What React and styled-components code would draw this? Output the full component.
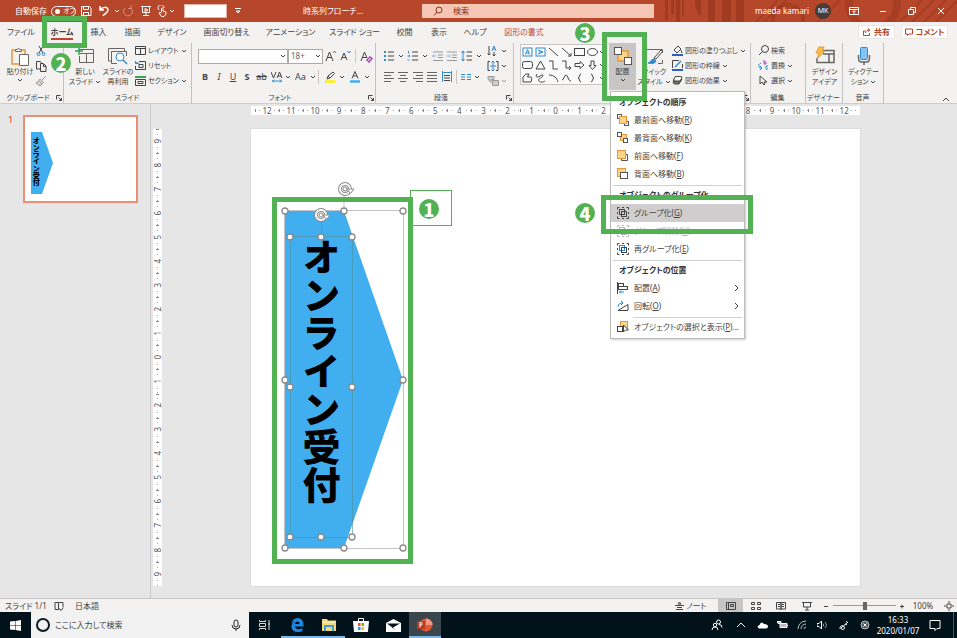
import React from "react";
import styled, { createGlobalStyle, css } from "styled-components";

const GREEN = "#52b152";
const INK = "#444444";
const BLUE = "#2e8bd0";
const ORANGE = "#e8963a";

const GlobalStyle = createGlobalStyle`
  * { box-sizing: border-box; }
  body {
    margin: 0;
    font-family: "Noto Sans", "Noto Sans CJK JP", sans-serif;
    font-feature-settings: "palt";
    font-size: 8px;
    line-height: 10px;
    color: ${INK};
    background: #e6e6e6;
  }
  button, input, select { font: inherit; font-feature-settings: inherit; color: inherit; }
`;

const Page = styled.div`
  display: flex;
  flex-direction: column;
  min-height: 100vh;
`;

const plain = css`
  border: 0;
  padding: 0;
  margin: 0;
  background: none;
  cursor: pointer;
  white-space: nowrap;
`;

const Svg = styled.svg`
  display: block;
  flex: none;
  fill: none;
  stroke: currentColor;
  stroke-width: 1;
`;

function Icon({ w = 12, h = w, box, children }) {
  return (
    <Svg width={w} height={h} viewBox={box || `0 0 ${w} ${h}`} aria-hidden="true">
      {children}
    </Svg>
  );
}

const Chevron = () => (
  <Icon w={6}>
    <path d="M1 2l2 2 2-2" />
  </Icon>
);

/* ---------- callouts ---------- */

const Frame = styled.div`
  position: absolute;
  z-index: 6;
  left: ${(p) => p.$x}px;
  top: ${(p) => p.$y}px;
  width: ${(p) => p.$w}px;
  height: ${(p) => p.$h}px;
  border: 5px solid ${GREEN};
  pointer-events: none;
`;

const Badge = styled.span`
  position: absolute;
  z-index: 7;
  left: ${(p) => p.$x}px;
  top: ${(p) => p.$y}px;
  width: 20px;
  height: 20px;
  border-radius: 50%;
  background: ${GREEN};
  color: #fff;
  font: 900 18px/20px "Noto Sans CJK JP", "Liberation Sans", sans-serif;
  text-align: center;
  pointer-events: none;
`;

/* ---------- title bar ---------- */

const TitleBar = styled.header`
  position: relative;
  display: grid;
  grid-template-columns: 248px 174px minmax(120px, 1fr) 303px;
  align-items: center;
  height: 22px;
  background: #b7472a;
  color: #fff;
`;

const Pattern = styled.svg`
  position: absolute;
  right: 0;
  top: 0;
`;

const QuickBar = styled.div`
  display: flex;
  align-items: center;
  padding-left: 15px;
`;

const AutoSave = styled.label`
  display: flex;
  align-items: center;
  gap: 4px;
  width: 67px;
  white-space: nowrap;
`;

const Toggle = styled.span`
  display: flex;
  align-items: center;
  gap: 3px;
  width: 25px;
  height: 11px;
  padding: 0 3px;
  border: 1px solid #fff;
  border-radius: 6px;
  font-size: 7px;
  line-height: 8px;
  input { appearance: none; flex: none; width: 5px; height: 5px; margin: 0; border-radius: 50%; background: #fff; }
`;

const TitleButton = styled.button`
  ${plain}
  display: grid;
  place-items: center;
  width: ${(p) => p.$w || 16}px;
  height: 18px;
  opacity: ${(p) => (p.disabled ? 0.4 : 1)};
`;

const TitleInput = styled.input`
  width: 43px;
  height: 14px;
  margin-left: 8px;
  border: 1px solid #e3b5a8;
  background: #fff;
`;

const DocTitle = styled.div`
  padding-left: 55px;
  white-space: nowrap;
`;

const SearchBox = styled.label`
  display: flex;
  align-items: center;
  gap: 10px;
  height: 14px;
  padding-left: 11px;
  background: #f6c6b5;
  color: #8c3219;
  input { flex: 1; min-width: 0; border: 0; padding: 0; background: none; outline: 0; }
  input::placeholder { color: #8c3219; opacity: 1; }
`;

const Account = styled.div`
  position: relative;
  display: flex;
  align-items: center;
  justify-content: flex-end;
  padding-right: 2px;
`;

const Avatar = styled.span`
  width: 16px;
  height: 16px;
  margin: 0 8px 0 6px;
  border-radius: 50%;
  background: #4b3a35;
  font-size: 7px;
  line-height: 16px;
  text-align: center;
`;

const UserName = styled.span`
  line-height: 12px;
`;

/* ---------- tabs ---------- */

const TabBar = styled.nav`
  display: flex;
  justify-content: space-between;
  height: 20px;
  background: #f3f2f1;
`;

const Tabs = styled.div`
  display: grid;
  grid-template-columns: 42px 40px 33px 35px 44px 65px 63px 65px 35px 34px 38px 60px;
`;

const TabCell = styled.div`
  position: relative;
  display: grid;
`;

const Tab = styled.button`
  ${plain}
  font-weight: ${(p) => (p.$active ? 700 : 400)};
  color: ${(p) => (p.$accent ? "#c8482c" : INK)};
  span {
    display: inline-block;
    height: 16px;
    line-height: 15px;
    border-bottom: 2px solid ${(p) => (p.$active ? "#c2452b" : "transparent")};
  }
`;

const TabActions = styled.div`
  display: flex;
  align-items: center;
  gap: 6px;
  padding-right: 9px;
`;

const ActionButton = styled.button`
  ${plain}
  display: flex;
  align-items: center;
  justify-content: center;
  gap: 3px;
  width: ${(p) => p.$w}px;
  height: 14px;
  border: 1px solid #e9e6e4;
  background: #fff;
  color: #b7472a;
  font-weight: 700;
  line-height: 12px;
`;

/* ---------- ribbon ---------- */

const Ribbon = styled.section`
  display: flex;
  position: relative;
  height: 62px;
  padding-top: 1px;
  background: #f3f2f1;
  border-bottom: 1px solid #cfcdcc;
  font-size: 7px;
`;

const Group = styled.div`
  display: flex;
  flex-direction: column;
  flex: none;
  width: ${(p) => p.$w}px;
  height: 60px;
  border-right: 1px solid #c4c2c1;
`;

const GroupBody = styled.div`
  display: flex;
  flex: 1;
  padding-left: ${(p) => p.$pad || 0}px;
  gap: ${(p) => p.$gap || 0}px;
`;

const GroupLabel = styled.div`
  display: flex;
  align-items: center;
  height: 10px;
  padding-right: 1px;
  white-space: nowrap;
  span { flex: 1; text-align: center; }
`;

const BigButton = styled.button`
  ${plain}
  display: flex;
  flex-direction: column;
  align-items: center;
  width: ${(p) => p.$w}px;
  height: 47px;
  padding-top: 3px;
  background: ${(p) => (p.$pressed ? "#c8c6c4" : "none")};
  svg:first-child { margin-bottom: 1px; }
`;

const LabelLine = styled.span`
  display: flex;
  align-items: center;
  gap: 2px;
  height: 10px;
`;

const Stack = styled.div`
  display: flex;
  flex-direction: column;
  align-items: flex-start;
`;

const SmallButton = styled.button`
  ${plain}
  display: flex;
  align-items: center;
  gap: 2px;
  height: 15px;
  opacity: ${(p) => (p.disabled ? 0.5 : 1)};
`;

const Rows = styled.div`
  display: flex;
  flex-direction: column;
  gap: 7px;
  padding-top: 6px;
`;

const Row = styled.div`
  display: flex;
  align-items: center;
  height: 14px;
`;

const Tool = styled.button`
  ${plain}
  display: grid;
  place-items: center;
  width: ${(p) => p.$w || 14}px;
  height: 14px;
  font-size: 9px;
  line-height: 14px;
  opacity: ${(p) => (p.disabled ? 0.5 : 1)};
  font-weight: ${(p) => (p.$bold ? 700 : 400)};
  font-style: ${(p) => (p.$italic ? "italic" : "normal")};
  text-decoration: ${(p) => p.$line || "none"};
`;

const Bar = styled.span`
  width: 1px;
  height: 14px;
  margin: 0 ${(p) => p.$m || 2}px;
  background: #c8c6c4;
`;

const SelectBox = styled.span`
  display: flex;
  align-items: center;
  width: ${(p) => p.$w}px;
  height: 15px;
  padding-right: 1px;
  border: 1px solid #ababab;
  background: #fff;
  font-size: 8px;
  select { appearance: none; flex: 1; min-width: 0; height: 13px; padding: 0 2px; border: 0; background: none; line-height: 12px; color: #666; }
`;

const Gallery = styled.div`
  display: grid;
  grid-template-columns: repeat(6, 13px) 6px;
  grid-auto-rows: 13px;
  align-self: flex-start;
  margin-top: 2px;
  outline: 1px solid #c8c6c4;
  background: #fafafa;
`;

const ShapeButton = styled.button`
  ${plain}
  display: grid;
  place-items: center;
`;

const ArrangeCell = styled.div`
  position: relative;
  z-index: 5;
  margin-left: 4px;
`;

const Collapse = styled.button`
  ${plain}
  margin: auto 7px 1px auto;
`;

/* ---------- menu ---------- */

const Menu = styled.div`
  position: absolute;
  left: 1px;
  top: 48px;
  width: 135px;
  padding: 1px 0 2px;
  border: 1px solid #bdbbb9;
  background: #fff;
  box-shadow: 1px 1px 2px rgba(0, 0, 0, 0.2);
  font-size: 8px;
`;

const MenuHead = styled.div`
  padding-left: 8px;
  font-weight: 700;
  line-height: 17px;
  height: 18px;
  color: #333;
  white-space: nowrap;
`;

const MenuRule = styled.hr`
  height: 1px;
  margin: 2px 2px 0 ${(p) => (p.$inset ? 22 : 2)}px;
  border: 0;
  background: #d2d0ce;
`;

const MenuCell = styled.div`
  position: relative;
`;

const MenuButton = styled.button`
  ${plain}
  display: flex;
  align-items: center;
  gap: 5px;
  width: 100%;
  height: 18px;
  padding: 0 4px 0 6px;
  text-align: left;
  line-height: 16px;
  background: ${(p) => (p.$active ? "#cfcdcd" : "none")};
  color: ${(p) => (p.disabled ? "#b5b5b5" : INK)};
  span { flex: 1; }
`;

/* ---------- workspace ---------- */

const Workspace = styled.main`
  display: flex;
  flex: 1;
  min-height: 494px;
`;

const ThumbPane = styled.aside`
  display: flex;
  align-items: flex-start;
  gap: 10px;
  width: 151px;
  padding: 11px 0 0 8px;
  border-right: 1px solid #cccccc;
  color: #d04727;
  font-size: 9px;
`;

const Thumb = styled.button`
  ${plain}
  position: relative;
  width: 115px;
  height: 88px;
  border: 2px solid #ee8f75;
  background: #fff;
`;

const ThumbText = styled.span`
  position: absolute;
  left: 7px;
  top: 20px;
  writing-mode: vertical-rl;
  font: 900 7px/8px "Noto Sans CJK JP", sans-serif;
  font-feature-settings: normal;
  color: #000;
`;

const ThumbShape = styled.svg`
  position: absolute;
  left: 6px;
  top: 15px;
`;

const Stage = styled.div`
  display: grid;
  grid-template-columns: 9px minmax(0, 1fr);
  grid-template-rows: 9px auto;
  column-gap: 89px;
  row-gap: 14px;
  align-content: start;
  flex: 1;
  min-width: 0;
  padding: 2px 97px 12px 2px;
`;

const RulerH = styled.div`
  grid-column: 2;
  display: flex;
  height: 9px;
  padding: 0 4px;
  background: #fff;
  color: #555;
`;

const RulerV = styled.div`
  display: flex;
  flex-direction: column;
  background: #fff;
  color: #555;
`;

const Cell = styled.span`
  flex: 1;
  display: flex;
  flex-direction: ${(p) => (p.$down ? "column" : "row")};
  align-items: center;
  justify-content: space-between;
  line-height: 9px;
  i { width: 1px; height: 1px; background: #aaa; }
`;

const Tick = styled.b`
  width: ${(p) => (p.$down ? 3 : 1)}px;
  height: ${(p) => (p.$down ? 1 : 3)}px;
  background: #888;
`;

const RulerNumber = styled.span`
  min-width: 5px;
  text-align: center;
  writing-mode: ${(p) => (p.$down ? "vertical-rl" : "horizontal-tb")};
  transform: ${(p) => (p.$down ? "rotate(180deg)" : "none")};
`;

const Slide = styled.div`
  position: relative;
  aspect-ratio: 609 / 457;
  background: #fff;
  box-shadow: 0 0 0 1px #dcdcdc;
`;

const ShapeArt = styled.svg`
  position: absolute;
  left: 25px;
  top: 42px;
  z-index: ${(p) => p.$z || 0};
`;

const ShapeText = styled.div`
  position: absolute;
  left: 50px;
  top: 109px;
  writing-mode: vertical-rl;
  font: 900 38px/40px "Noto Sans CJK JP", sans-serif;
  font-feature-settings: normal;
  color: #000;
`;

const NumberBox = styled.div`
  position: absolute;
  left: 159px;
  top: 61px;
  width: 42px;
  height: 36px;
  border: 1px solid ${GREEN};
`;

/* ---------- status bar and task bar ---------- */

const StatusBar = styled.footer`
  display: flex;
  align-items: center;
  height: 14px;
  padding-left: 5px;
  border-top: 1px solid #c6c6c6;
  background: #f3f2f1;
  line-height: 12px;
`;

const Push = styled.span`
  flex: 1;
`;

const StatusText = styled.span`
  width: ${(p) => p.$w}px;
  white-space: nowrap;
`;

const StatusButton = styled.button`
  ${plain}
  display: flex;
  align-items: center;
  justify-content: center;
  gap: 2px;
  width: ${(p) => p.$w}px;
  height: 13px;
  margin-right: ${(p) => p.$after || 0}px;
  background: ${(p) => (p.$active ? "#c8c6c4" : "none")};
`;

const Zoom = styled.input`
  appearance: none;
  width: 63px;
  height: 9px;
  margin: 0 2px 0 0;
  background: linear-gradient(#999, #999) center / 100% 1px no-repeat;
  &::-webkit-slider-thumb { appearance: none; width: 4px; height: 8px; background: #666; }
`;

const TaskBar = styled.footer`
  display: flex;
  align-items: stretch;
  height: 26px;
  background: #02121a;
  color: #fff;
`;

const TaskButton = styled.button`
  ${plain}
  display: grid;
  place-items: center;
  width: ${(p) => p.$w || 32}px;
  background: ${(p) => (p.$active ? "#3a464c" : "none")};
  box-shadow: ${(p) => (p.$open ? "inset 0 -2px #76b9ed" : "none")};
`;

const TaskSearch = styled.label`
  display: flex;
  align-items: center;
  gap: 5px;
  width: 218px;
  padding: 0 8px 0 5px;
  background: #f2f2f2;
  color: #222;
  input { flex: 1; min-width: 0; padding: 0; border: 0; background: none; line-height: 14px; }
  input::placeholder { color: #444; opacity: 1; }
`;

const Clock = styled.div`
  display: flex;
  flex-direction: column;
  justify-content: center;
  width: 48px;
  text-align: center;
  line-height: 11px;
`;

const DeskEdge = styled.span`
  width: 4px;
  margin-left: 5px;
  border-left: 1px solid #4c5a60;
`;

/* ---------- icons ---------- */

const Launcher = () => (
  <Tool $w={6} aria-label="詳細">
    <Icon w={6}>
      <path d="M.5 4.500V.5h4M2.500 2.500l3 3M5.500 3v2.500H3" />
    </Icon>
  </Tool>
);

const Lines = ({ rows }) => (
  <Icon w={11}>
    {rows.map(([a, b], i) => (
      <path key={i} stroke="#666" d={`M${a} ${i * 3 + 0.5}H${b}`} />
    ))}
  </Icon>
);

const Bullets = () => (
  <Icon w={12}>
    <path stroke={BLUE} strokeWidth="2" d="M1 2h2M1 6h2M1 10h2" />
    <path d="M5 2h6M5 6h6M5 10h6" />
  </Icon>
);

const Numbering = () => (
  <Icon w={12}>
    <path stroke={BLUE} d="M1.500 1v2.500M.5 6h2M.5 10h2M2.500 5v2" />
    <path d="M5 2h6M5 6h6M5 10h6" />
  </Icon>
);

const Indent = ({ right }) => (
  <Icon w={12}>
    <path d="M1 2h10M6 5h5M6 7.500h5M1 10.500h10" />
    <path stroke={BLUE} d={right ? "M.5 6h4M3 4.500L4.500 6 3 7.500" : "M.5 6h4M2 4.500L.5 6 2 7.500"} />
  </Icon>
);

const SHAPES = [
  <><rect x="1" y="1" width="9" height="8" stroke={BLUE} /><path stroke={BLUE} d="M3.500 7.500l2-5 2 5M4 6h3" /></>,
  <><rect x="1" y="1" width="9" height="8" stroke={BLUE} /><path stroke={BLUE} d="M3 3l5 2-5 2M5 4v2" /></>,
  <path d="M1 1l9 8" />,
  <path d="M1 1l9 8M10 6v3H7" />,
  <rect x=".5" y="1.500" width="10" height="7" />,
  <ellipse cx="5.500" cy="5" rx="5" ry="3.500" />,
  <rect x=".5" y="1.500" width="10" height="7" rx="2" />,
  <path d="M5.500 1L10 9H1z" />,
  <path d="M1 1h4v8h5" />,
  <path d="M1 1h4v7h5M8 6l2 2-2 2" />,
  <path d="M1 3.500h5V1.500L10 5 6 8.500v-2H1z" />,
  <path d="M4 1h3v4.500h2L5.500 9.500 2 5.500h2z" />,
  <path d="M1 9V4l3-3h3L5.500 4H9c1 0 1 2 0 5z" />,
  <path d="M2 1c-2 3 0 4 3 2s4-1 2 1-5 2-3 4 4 1 6 0" />,
  <path d="M1 2c5 0 8 3 9 7" />,
  <path d="M1 7c2 0 2-5 4-5s2 6 5 6" />,
  <path d="M7 1C5 1 6 5 4 5c2 0 1 4 3 4" />,
  <path d="M4 1c2 0 1 4 3 4-2 0-1 4-3 4" />,
];

const ArrangeIcon = () => (
  <Icon w={20}>
    <rect x="5" y="5" width="10" height="10" fill="#fbd48a" stroke={ORANGE} strokeWidth="1.500" />
    <rect x="1.500" y="1.500" width="7" height="7" fill="#fff" stroke="#555" />
    <rect x="11.500" y="11.500" width="7" height="7" fill="#fff" stroke="#555" />
  </Icon>
);

const FrontIcon = () => (
  <Icon w={12}>
    <rect x=".5" y=".5" width="4" height="4" stroke="#555" />
    <rect x="7.500" y="7.500" width="4" height="4" stroke="#555" />
    <rect x="2.500" y="2.500" width="7" height="7" fill="#fbd48a" stroke={ORANGE} />
  </Icon>
);

const BackIcon = () => (
  <Icon w={12}>
    <rect x="3.500" y="2.500" width="6" height="6" fill="#fbd48a" stroke={ORANGE} />
    <rect x=".5" y=".5" width="4" height="4" fill="#fff" stroke="#555" />
    <rect x="6.500" y="6.500" width="4" height="4" fill="#fff" stroke="#555" />
  </Icon>
);

const ForwardIcon = () => (
  <Icon w={12}>
    <path stroke="#555" d="M8.500 4.500h2v6h-6V8" />
    <rect x=".5" y=".5" width="8" height="8" fill="#fbd48a" stroke={ORANGE} />
  </Icon>
);

const BackwardIcon = () => (
  <Icon w={12}>
    <rect x=".5" y=".5" width="8" height="8" fill="#fbd48a" stroke={ORANGE} />
    <rect x="3.500" y="4.500" width="7" height="6" fill="#fff" stroke="#555" />
  </Icon>
);

const GroupIcon = ({ regroup }) => (
  <Icon w={12}>
    <path d="M.5 2.500v-2h2M9.500.5h2v2M11.500 9.500v2h-2M2.500 11.500h-2v-2M5 .5h2M5 11.500h2M.5 5v2M11.500 5v2" />
    <rect x="2.500" y="2.500" width="5" height="5" stroke={regroup ? BLUE : "currentColor"} />
    <rect x="4.500" y="4.500" width="5" height="5" />
  </Icon>
);

const AlignIcon = () => (
  <Icon w={12}>
    <path d="M.5 0v12" />
    <rect x="1.500" y="1.500" width="5" height="3" />
    <rect x="1.500" y="4.500" width="9" height="3" />
    <path stroke={BLUE} d="M7 10H2M4 8.500L2.500 10 4 11.500" />
  </Icon>
);

const RotateIcon = () => (
  <Icon w={12}>
    <path d="M1 10.500h10V4.500z" />
    <path stroke={BLUE} d="M1 7c0-3 2-4 5-4M4 1l2 2-2 2" />
  </Icon>
);

const PaneIcon = () => (
  <Icon w={12}>
    <rect x="3.500" y=".5" width="7" height="7" fill="#fbd48a" stroke={ORANGE} />
    <rect x=".5" y="5.500" width="5" height="5" fill="#fff" />
    <path fill="#fff" d="M6.500 4v7l2-2h3z" />
  </Icon>
);

/* ---------- sections ---------- */

function Title() {
  return (
    <TitleBar>
      <Pattern width="297" height="22" viewBox="0 0 297 22" aria-hidden="true">
        <g fill="#8e2f18" fillOpacity=".55">
          <path d="M5 0h3v20H5zM11 0h3v14h-3zM16 0h4v22h-4zM22 0h2v16h-2zM35 0h6v16q-7-6-6-16zM48 0h7v22h-7zM62 0h9v22h-9zM76 0h8v22h-8z" />
        </g>
        <g fill="none" stroke="#8e2f18" strokeOpacity=".4" strokeWidth="4">
          <circle cx="128" cy="20" r="15" />
          <circle cx="213" cy="4" r="24" strokeWidth="8" />
          <path d="M96 22L118 0M104 22L126 0M240 22L262 0M252 22L274 0M264 22L286 0M276 22L297 1M158 22L180 0" strokeWidth="2" />
        </g>
      </Pattern>
      <QuickBar>
        <AutoSave>
          自動保存
          <Toggle>
            <input type="checkbox" aria-label="自動保存" />
            オフ
          </Toggle>
        </AutoSave>
        <TitleButton aria-label="上書き保存">
          <Icon w={12}><path d="M1.500 1.500h8l1.500 1.500v7.500H1.500zM3.500 1.500v3h5v-3M3.500 10.500v-3h5v3" /></Icon>
        </TitleButton>
        <TitleButton $w={20} aria-label="元に戻す">
          <Icon w={12}><path strokeWidth="1.500" d="M2 1v4h4M2 5c2-3 8-4 8 0 0 3-4 4-5 6" /></Icon>
        </TitleButton>
        <TitleButton $w={8} aria-label="元に戻す一覧"><Chevron /></TitleButton>
        <TitleButton $w={16} disabled aria-label="やり直し">
          <Icon w={12}><path d="M9 3a4.500 4.500 0 1 1-6 0M9 0v3.500H6" /></Icon>
        </TitleButton>
        <TitleButton $w={20} aria-label="スライドショー">
          <Icon w={12}><path d="M1 1.500h10M2.500 2v5.500h7V2M6 8v3M3 10.500h6M5 3.500v3L8 5z" /></Icon>
        </TitleButton>
        <TitleButton $w={14} aria-label="タッチ">
          <Icon w={12}><path d="M3 5a3 3 0 1 1 5-2M5.500 7V3.500q1-1 1.500 0V6l3 1v2l-2 2.500H5.500L3 8q0-1.500 2.500 0" /></Icon>
        </TitleButton>
        <TitleButton $w={8} aria-label="タッチ一覧"><Chevron /></TitleButton>
        <TitleInput aria-label="名前" />
        <TitleButton $w={22} aria-label="クイックアクセスのカスタマイズ">
          <Icon w={6}><path d="M0 .5h6M1 3l2 2 2-2z" /></Icon>
        </TitleButton>
      </QuickBar>
      <DocTitle>時系列フローチ…</DocTitle>
      <SearchBox>
        <Icon w={10}><circle cx="6" cy="4" r="3" /><path d="M4 6L1 9.500" /></Icon>
        <input placeholder="検索" aria-label="検索" />
      </SearchBox>
      <Account>
        <UserName>maeda kamari</UserName>
        <Avatar>MK</Avatar>
        <TitleButton $w={29} aria-label="リボンの表示オプション">
          <Icon w={10}><path d="M.5 1.500h9v7h-9zM.5 3.500h9M5 8V5M3.500 6L5 4.500 6.500 6" /></Icon>
        </TitleButton>
        <TitleButton $w={29} aria-label="最小化"><Icon w={8}><path d="M1 4.500h6" /></Icon></TitleButton>
        <TitleButton $w={29} aria-label="元に戻す (縮小)">
          <Icon w={8}><path d="M.5 2.500h5v5h-5zM2.500 2V.5h5v5H6" /></Icon>
        </TitleButton>
        <TitleButton $w={29} aria-label="閉じる"><Icon w={8}><path d="M1 1l6 6M7 1L1 7" /></Icon></TitleButton>
      </Account>
    </TitleBar>
  );
}

const TABS = ["ファイル", "ホーム", "挿入", "描画", "デザイン", "画面切り替え", "アニメーション", "スライド ショー", "校閲", "表示", "ヘルプ", "図形の書式"];

function TabRow() {
  return (
    <TabBar>
      <Tabs>
        {TABS.map((name, i) => (
          <TabCell key={name}>
            <Tab $active={i === 1} $accent={i === 11}><span>{name}</span></Tab>
            {i === 1 && (
              <>
                <Frame $x={0} $y={-6} $w={45} $h={32} />
                <Badge $x={9} $y={31}>2</Badge>
              </>
            )}
          </TabCell>
        ))}
      </Tabs>
      <TabActions>
        <ActionButton $w={37}>
          <Icon w={8}><path d="M2.500 3H.5v4.500h6V5M2.500 5c0-2 2-3 4-3M5 .5L7 2 5 3.500" /></Icon>
          共有
        </ActionButton>
        <ActionButton $w={47}>
          <Icon w={8}><path d="M.5 1h7v5H4L2.500 7.500V6h-2z" /></Icon>
          コメント
        </ActionButton>
      </TabActions>
    </TabBar>
  );
}

function RibbonGroup({ w, pad, gap, label, launcher, children }) {
  return (
    <Group $w={w}>
      <GroupBody $pad={pad} $gap={gap}>{children}</GroupBody>
      <GroupLabel><span>{label}</span>{launcher && <Launcher />}</GroupLabel>
    </Group>
  );
}

function ArrangeMenu() {
  return (
    <Menu>
      <MenuHead>オブジェクトの順序</MenuHead>
      <MenuButton><FrontIcon /><span>最前面へ移動(<u>R</u>)</span></MenuButton>
      <MenuButton><BackIcon /><span>最背面へ移動(<u>K</u>)</span></MenuButton>
      <MenuButton><ForwardIcon /><span>前面へ移動(<u>F</u>)</span></MenuButton>
      <MenuButton><BackwardIcon /><span>背面へ移動(<u>B</u>)</span></MenuButton>
      <MenuRule />
      <MenuHead>オブジェクトのグループ化</MenuHead>
      <MenuCell>
        <MenuButton $active><GroupIcon /><span>グループ化(<u>G</u>)</span></MenuButton>
        <Frame $x={-10} $y={-9} $w={152} $h={39} />
        <Badge $x={-36} $y={-1}>4</Badge>
      </MenuCell>
      <MenuButton disabled><GroupIcon /><span>グループ解除(<u>U</u>)</span></MenuButton>
      <MenuButton><GroupIcon regroup /><span>再グループ化(<u>E</u>)</span></MenuButton>
      <MenuRule />
      <MenuHead>オブジェクトの位置</MenuHead>
      <MenuButton><AlignIcon /><span>配置(<u>A</u>)</span><Icon w={6} h={8}><path d="M1 1l3 3-3 3" /></Icon></MenuButton>
      <MenuButton><RotateIcon /><span>回転(<u>O</u>)</span><Icon w={6} h={8}><path d="M1 1l3 3-3 3" /></Icon></MenuButton>
      <MenuRule $inset />
      <MenuButton><PaneIcon /><span>オブジェクトの選択と表示(<u>P</u>)...</span></MenuButton>
    </Menu>
  );
}

function RibbonBar() {
  return (
    <Ribbon>
      <RibbonGroup w={64} pad={5} label="クリップボード" launcher>
        <BigButton $w={30}>
          <Icon w={20}>
            <path stroke={ORANGE} strokeWidth="1.500" d="M9 18H2V4h3M12 4h3v4" />
            <path fill="#fff" stroke="#666" d="M5.500 5.500v-2h2q1-3 2 0h2v2z" />
            <path fill="#fff" stroke="#666" d="M9.500 8.500h9v11h-9z" />
          </Icon>
          <LabelLine>貼り付け</LabelLine>
          <Chevron />
        </BigButton>
        <Stack>
          <SmallButton aria-label="切り取り">
            <Icon w={12}><path d="M4 1l4 7M8 1L4 8" /><circle cx="3.500" cy="9" r="1.500" stroke={BLUE} /><circle cx="8.500" cy="9" r="1.500" stroke={BLUE} /></Icon>
          </SmallButton>
          <SmallButton aria-label="コピー">
            <Icon w={12}><path d="M5 9H1.500V1.500H5l1.500 1M5.500 3.500h3l2.500 2.500v5.500H5.500zM8.500 4v2.500H11" /></Icon>
          </SmallButton>
          <SmallButton disabled aria-label="書式のコピー">
            <Icon w={12}><path d="M11 1L7 5M5 4l3.500 3.500L7 9 3.500 5.500zM3.500 6L1 8l4 3 2-2" fill="#bbb" /></Icon>
          </SmallButton>
        </Stack>
      </RibbonGroup>

      <RibbonGroup w={128} pad={5} gap={1} label="スライド">
        <BigButton $w={32}>
          <Icon w={20}>
            <path stroke="#666" d="M4.500 6V3.500h14v13h-14V10M5 7.500h13M11.500 8v8" />
            <path stroke="#35a35a" strokeWidth="1.500" d="M4 1v8M0 5h8" />
          </Icon>
          <LabelLine>新しい</LabelLine>
          <LabelLine>スライド<Chevron /></LabelLine>
        </BigButton>
        <BigButton $w={32}>
          <Icon w={20}>
            <path stroke="#666" d="M3 15H.5V2.500h16V5M9 17.500H3.500v-12h15V10" />
            <circle cx="12" cy="11" r="4" stroke={BLUE} fill="#fff" /><path stroke={BLUE} strokeWidth="1.500" d="M15 14l4 4" />
          </Icon>
          <LabelLine>スライドの</LabelLine>
          <LabelLine>再利用</LabelLine>
        </BigButton>
        <Stack>
          <SmallButton><Icon w={11}><path d="M.5 1.500h10v8H.5zM1 3.500h9M5.500 4v5" /></Icon>レイアウト<Chevron /></SmallButton>
          <SmallButton><Icon w={11}><path d="M4 1.500h6.500v8H.5V6M4 4.500h4v3H4z" /><path stroke={BLUE} d="M4 5C4 2 2 2 .5 3.500M.5 1v2.500H3" /></Icon>リセット</SmallButton>
          <SmallButton><Icon w={11}><path d="M.5 4.500h10v6H.5zM3 6.500h5v2H3z" /><path stroke="#35a35a" strokeWidth="2" d="M0 2h11" /></Icon>セクション<Chevron /></SmallButton>
        </Stack>
      </RibbonGroup>

      <RibbonGroup w={184} pad={6} label="フォント" launcher>
        <Rows>
          <Row>
            <SelectBox $w={90}><select aria-label="フォント名"><option></option></select><Chevron /></SelectBox>
            <SelectBox $w={35}><select aria-label="フォント サイズ"><option>18+</option></select><Chevron /></SelectBox>
            <Tool $w={15} aria-label="拡大"><Icon w={12}><path d="M1 11l3.500-9L8 11M2.500 7.500h4" /><path stroke={BLUE} d="M8 3l1.500-2L11 3" /></Icon></Tool>
            <Tool $w={14} aria-label="縮小"><Icon w={12}><path d="M2 10l3-7 3 7M3 7.500h4" /><path stroke={BLUE} d="M8.500 1L10 3l1.500-2" /></Icon></Tool>
            <Bar $m={3} />
            <Tool $w={14} aria-label="書式のクリア"><Icon w={13}><path d="M1 11l3.500-9L7 8M2.500 7.500h4" /><path stroke="#a349b8" strokeWidth="1.500" d="M7 10l3-3 2 1.500L9 12z" /></Icon></Tool>
          </Row>
          <Row>
            <Tool $bold>B</Tool>
            <Tool $italic>I</Tool>
            <Tool $line="underline">U</Tool>
            <Tool $bold>S</Tool>
            <Tool $w={15} $line="line-through">ab</Tool>
            <Tool $w={15} aria-label="文字の間隔">
              <Icon w={12}><path d="M0 1l2.500 6L5 1M6 7l2.500-6L11 7M7 5h3" /><path stroke={BLUE} d="M1 10h10M3 8.500L1.500 10 3 11.500M9 8.500l1.500 1.500L9 11.500" /></Icon>
            </Tool>
            <Tool $w={8} aria-label="間隔一覧"><Chevron /></Tool>
            <Tool $w={17}>Aa</Tool>
            <Tool $w={7} aria-label="文字種一覧"><Chevron /></Tool>
            <Bar $m={2} />
            <Tool $w={17} aria-label="蛍光ペン">
              <Icon w={12}><path d="M3 8l1-3 5-4 1.500 1.500L6 7 3 8M4 5l2 2" /><path stroke="#fff100" strokeWidth="2.500" d="M1 10.500h10" /></Icon>
            </Tool>
            <Tool $w={8} aria-label="蛍光ペン一覧"><Chevron /></Tool>
            <Tool $w={17} aria-label="文字の色">
              <Icon w={12}><path d="M3 7.500l3-7 3 7M4 5h4" /><path stroke="#41aef0" strokeWidth="2.500" d="M1 10.500h10" /></Icon>
            </Tool>
            <Tool $w={8} aria-label="文字の色一覧"><Chevron /></Tool>
          </Row>
        </Rows>
      </RibbonGroup>

      <RibbonGroup w={138} pad={6} gap={4} label="段落" launcher>
        <Rows>
          <Row>
            <Tool $w={14} aria-label="箇条書き"><Bullets /></Tool>
            <Tool $w={10} aria-label="箇条書き一覧"><Chevron /></Tool>
            <Tool $w={14} aria-label="段落番号"><Numbering /></Tool>
            <Tool $w={10} aria-label="段落番号一覧"><Chevron /></Tool>
            <Tool $w={15} disabled aria-label="インデントを減らす"><Indent /></Tool>
            <Tool $w={14} disabled aria-label="インデントを増やす"><Indent right /></Tool>
            <Tool $w={16} aria-label="行間"><Icon w={12}><path stroke={BLUE} d="M2 1v10M.5 3L2 1l1.500 2M.5 9L2 11l1.500-2" /><path d="M5.500 2H11M5.500 6H11M5.500 10H11" /></Icon></Tool>
            <Tool $w={8} aria-label="行間一覧"><Chevron /></Tool>
          </Row>
          <Row>
            <Tool aria-label="左揃え"><Lines rows={[[0, 10], [0, 7], [0, 10], [0, 7]]} /></Tool>
            <Tool $w={15} aria-label="中央揃え"><Lines rows={[[0, 10], [2, 8], [0, 10], [2, 8]]} /></Tool>
            <Tool aria-label="右揃え"><Lines rows={[[0, 10], [3, 10], [0, 10], [3, 10]]} /></Tool>
            <Tool $w={15} aria-label="両端揃え"><Lines rows={[[0, 10], [0, 10], [0, 10], [0, 10]]} /></Tool>
            <Tool aria-label="均等割り付け"><Icon w={12}><path stroke={BLUE} d="M1.500 0v11M10.500 0v11M2 1.500h8" /><path d="M3 4.500h6M3 7h6M3 9.500h6" /></Icon></Tool>
            <Bar $m={2} />
            <Tool aria-label="段組み"><Icon w={10}><path stroke={BLUE} d="M0 2.500h4M6 2.500h4M0 5h4M6 5h4M0 7.500h4M6 7.500h4" /></Icon></Tool>
            <Tool $w={8} aria-label="段組み一覧"><Chevron /></Tool>
          </Row>
        </Rows>
        <Stack>
          <SmallButton aria-label="文字列の方向"><Icon w={12}><path d="M2 1v9M.5 8.500L2 10l1.500-1.500M7 7v4M5.500 9.500L7 11l1.500-1.500" /><path stroke={BLUE} d="M5 6l2-5 2 5M6 4h2" /></Icon><Chevron /></SmallButton>
          <SmallButton aria-label="文字の配置"><Icon w={12}><path d="M3 1.500H1v9h2M9 1.500h2v9H9" /><path stroke={BLUE} d="M6 1v10M3 6h6M4.500 2.500L6 1l1.500 1.500M4.500 9.500L6 11l1.500-1.500" /></Icon><Chevron /></SmallButton>
          <SmallButton disabled aria-label="SmartArt に変換"><Icon w={12}><path fill="#aaa" d="M1 1.500h6v3H4v3L1 4zM5.500 5.500h6v5h-6z" /></Icon><Chevron /></SmallButton>
        </Stack>
      </RibbonGroup>

      <RibbonGroup w={237} pad={7} launcher>
        <Gallery>
          {[0, 1, 2].map((r) => (
            <React.Fragment key={r}>
              {SHAPES.slice(r * 6, r * 6 + 6).map((shape, i) => (
                <ShapeButton key={i} aria-label={`図形 ${r * 6 + i + 1}`}><Icon w={11} h={10}>{shape}</Icon></ShapeButton>
              ))}
              <ShapeButton aria-label={`一覧 ${r + 1}`}><Chevron /></ShapeButton>
            </React.Fragment>
          ))}
        </Gallery>
        <ArrangeCell>
          <BigButton $w={27} $pressed>
            <ArrangeIcon />
            <LabelLine>配置</LabelLine>
            <Chevron />
          </BigButton>
          <ArrangeMenu />
          <Frame $x={-7} $y={-11} $w={45} $h={69} />
          <Badge $x={-34} $y={-20}>3</Badge>
        </ArrangeCell>
        <BigButton $w={36}>
          <Icon w={22} h={20}>
            <path stroke="#666" d="M4 3.500h15.500V7M19.500 14v3.500H15" />
            <path fill="#fff" d="M20 5l-7 8-2-1 7-8z" /><path fill={BLUE} stroke={BLUE} d="M11 13l2 2c-1 3-5 3-8 2 2 0 3-4 6-4z" />
          </Icon>
          <LabelLine>クイック</LabelLine>
          <LabelLine>スタイル<Chevron /></LabelLine>
        </BigButton>
        <Stack>
          <SmallButton><Icon w={11}><path d="M2 5l4-4 3 3-4 4zM9 5l1 3" /><path stroke="#2b5fc0" strokeWidth="2" d="M0 10h11" /></Icon>図形の塗りつぶし<Chevron /></SmallButton>
          <SmallButton><Icon w={11}><path d="M.5 8V.5H7M10.500 4v4" /><path stroke={BLUE} strokeWidth="1.500" d="M3 7l6-6" /><path stroke="#2b5fc0" strokeWidth="2" d="M0 10h11" /></Icon>図形の枠線<Chevron /></SmallButton>
          <SmallButton><Icon w={11}><path d="M3.500 1.500h5q2 0 1 2L8 6H3Q1 6 2 4zM1.500 5q-1 4 1 4H7l3-5" fill="#777" /><path fill="#fff" d="M3.500 1.500h5q2 0 1 2L8 6H3Q1 6 2 4z" /></Icon>図形の効果<Chevron /></SmallButton>
        </Stack>
      </RibbonGroup>

      <RibbonGroup w={55} pad={7} label="編集">
        <Stack>
          <SmallButton><Icon w={11}><circle cx="7" cy="4" r="3.500" /><path d="M4.500 6.500L1 10" /></Icon>検索</SmallButton>
          <SmallButton><Icon w={11}><path stroke="#a349b8" d="M6 0v4M6 2h2v2H6" /><path stroke={BLUE} d="M3 3C0 4 0 8 3 8M2 6l2 2-2 2M10 6H8v3h2" /></Icon>置換<Chevron /></SmallButton>
          <SmallButton><Icon w={11}><path d="M2 1v8l2-2 2 3 1-1-1-2h3z" /></Icon>選択<Chevron /></SmallButton>
        </Stack>
      </RibbonGroup>

      <RibbonGroup w={37} pad={1} label="デザイナー">
        <BigButton $w={35}>
          <Icon w={20}>
            <path stroke="#666" strokeWidth="1.500" d="M8 4.500h11v12H2V12M8 8h11M14 8v8" />
            <path fill="#fbc04a" stroke={ORANGE} d="M4 1h5L7 5h3L2 13l2-6H1z" />
          </Icon>
          <LabelLine>デザイン</LabelLine>
          <LabelLine>アイデア</LabelLine>
        </BigButton>
      </RibbonGroup>

      <RibbonGroup w={41} pad={1} label="音声">
        <BigButton $w={39}>
          <Icon w={20}>
            <path stroke="#666" strokeWidth="1.500" d="M4.500 9v3q0 4 3 4h5q3 0 3-4V9M10 16v3" />
            <rect x="6.500" y="1.500" width="7" height="12" rx="1" fill="#83c5f4" stroke={BLUE} />
          </Icon>
          <LabelLine>ディクテー</LabelLine>
          <LabelLine>ション<Chevron /></LabelLine>
        </BigButton>
      </RibbonGroup>
      <Collapse aria-label="リボンを折りたたむ"><Icon w={8} h={6}><path d="M1 5l3-3 3 3" /></Icon></Collapse>
    </Ribbon>
  );
}

const scale = (n) => Array.from({ length: n * 2 + 1 }, (_, i) => Math.abs(n - i));

const HANDLES = [
  [34, 34], [93, 34], [152, 34], [34, 203], [152, 203], [34, 371], [93, 371], [152, 371],
  [39, 60], [70, 60], [101, 60], [39, 210], [101, 210], [39, 360], [70, 360], [101, 360],
];

const Turn = ({ x, y }) => (
  <g transform={`translate(${x} ${y})`}>
    <circle r="5" fill="#fff" stroke="#8a8a8a" strokeWidth="4" />
    <circle r="5" fill="none" stroke="#fff" strokeWidth="2" />
    <path d="M2 0h7L5.500 4.500z" fill="#fff" stroke="#8a8a8a" />
    <circle r="2" fill="none" stroke="#8a8a8a" />
  </g>
);

function RulerCells({ n, down }) {
  return scale(n).map((value, i) => (
    <Cell key={i} $down={down}>
      <Tick $down={down} />
      <i />
      <RulerNumber $down={down}>{value}</RulerNumber>
      <i />
      <i />
    </Cell>
  ));
}

function Editor() {
  return (
    <Workspace>
      <ThumbPane>
        1
        <Thumb aria-label="スライド 1">
          <ThumbShape width="23" height="62" viewBox="0 0 23 62"><path fill="#41aef0" d="M0 0h11l11 31-11 31H0z" /></ThumbShape>
          <ThumbText>オンライン受付</ThumbText>
        </Thumb>
      </ThumbPane>
      <Stage>
        <RulerH><RulerCells n={12} /></RulerH>
        <RulerV><RulerCells n={9} down /></RulerV>
        <Slide>
          <NumberBox><Badge $x={8} $y={8}>1</Badge></NumberBox>
          <ShapeArt width="135" height="385" viewBox="25 -6 135 385">
            <path fill="#41aef0" d="M34 34h59l59 169-59 168H34z" />
          </ShapeArt>
          <ShapeText>オンライン受付</ShapeText>
          <Frame $x={21} $y={68} $w={141} $h={367} />
          <ShapeArt $z={7} width="135" height="385" viewBox="25 -6 135 385">
            <path fill="none" stroke="#8a8a8a" strokeOpacity=".5" d="M33.500 33.500h119v338h-119zM93 18v16" />
            <path fill="none" stroke="#4b8f98" strokeOpacity=".6" d="M39.500 59.500h62v301h-62zM70.500 44v16" />
            {HANDLES.map(([x, y]) => (
              <circle key={`${x}-${y}`} cx={x} cy={y} r="3" fill="#fff" stroke="#8a8a8a" strokeWidth="1.300" />
            ))}
            <Turn x={94} y={12} />
            <Turn x={70} y={38} />
          </ShapeArt>
        </Slide>
      </Stage>
    </Workspace>
  );
}

function Status() {
  return (
    <StatusBar>
      <StatusText $w={49}>スライド 1/1</StatusText>
      <StatusButton $w={10} $after={11} aria-label="スペル チェック"><Icon w={10}><path d="M1 1.500h3.500v7H1zM4.500 1.500H9v5M5 8h1l1 1.500L9 7" /></Icon></StatusButton>
      <StatusText>日本語</StatusText>
      <Push />
      <StatusButton $w={34} $after={10}><Icon w={9}><path d="M0 4.500h9M2 6.500h5M1 8.500h7M3 3l1.500-2L6 3z" /></Icon>ノート</StatusButton>
      <StatusButton $w={25} $active aria-label="標準"><Icon w={10}><path d="M.5 1.500h9v7h-9zM2.500 2v6M4.500 3.500h3v2h-3z" /></Icon></StatusButton>
      <StatusButton $w={25} aria-label="スライド一覧"><Icon w={10}><path d="M.5 1.500h3v2h-3zM6.500 1.500h3v2h-3zM.5 6.500h3v2h-3zM6.500 6.500h3v2h-3z" /></Icon></StatusButton>
      <StatusButton $w={26} aria-label="閲覧表示"><Icon w={10}><path d="M5 2v7M.5 1.500H5V8H.5zM5 1.500h4.500V8H5M2 3.500h2M2 5.500h2M6 3.500h2M6 5.500h2" /></Icon></StatusButton>
      <StatusButton $w={25} aria-label="スライドショー"><Icon w={10}><path d="M0 1.500h10M1.500 2v4h7V2M5 6v3M3 9h4" /></Icon></StatusButton>
      <StatusButton $w={14} aria-label="縮小"><Icon w={6}><path d="M1 3.500h4" /></Icon></StatusButton>
      <Zoom type="range" aria-label="ズーム" />
      <StatusButton $w={8} aria-label="拡大"><Icon w={6}><path d="M1 3.500h4M3 1.500v4" /></Icon></StatusButton>
      <StatusButton $w={34}>100%</StatusButton>
      <StatusButton $w={17} aria-label="ウィンドウに合わせる"><Icon w={10}><path d="M3 3h4v4H3zM5 0v2M5 8v2M0 5h2M8 5h2" /></Icon></StatusButton>
    </StatusBar>
  );
}

function Tasks() {
  return (
    <TaskBar>
      <TaskButton $w={31} aria-label="スタート">
        <Icon w={11}><path stroke="none" fill="#fff" d="M0 1.500L5 1v4H0zM5.500 1L11 0v5H5.500zM0 5.500h5V10l-5-.5zM5.500 5.500H11V11l-5.500-1z" /></Icon>
      </TaskButton>
      <TaskSearch>
        <Icon w={14}><circle cx="7" cy="7" r="6" stroke="#0b1c24" strokeWidth="2" /></Icon>
        <input placeholder="ここに入力して検索" aria-label="ここに入力して検索" />
        <Icon w={10} h={12}><rect x="3" y="1" width="4" height="7" rx="2" /><path d="M1 6q0 4 4 4t4-4M5 10v2" /></Icon>
      </TaskSearch>
      <TaskButton aria-label="タスク ビュー">
        <Icon w={12}><path d="M.5 1v1.500h6V1M.5 11V9.500h6V11M.5 4.500h6v3h-6zM10 1v10M9 5h2" stroke="#ddd" /></Icon>
      </TaskButton>
      <TaskButton $open aria-label="Edge">
        <Icon w={14}><path stroke="none" fill="#1f86e0" d="M1 6C2 2 4.500 0 7.500 0 11.500 0 13.500 3 13.500 7v1.500H5c.3 3 4 3.500 7.500 1.800v2.700C7 15.500 1.500 13.500 1.500 8.500 1.500 6 3 4 5 3.200 3 3.500 2 4.500 1 6zM5 6h4.500C9.500 2.500 5.500 2.700 5 6z" /></Icon>
      </TaskButton>
      <TaskButton $open aria-label="エクスプローラー">
        <Icon w={14} h={12}><path stroke="none" fill="#f8d775" d="M0 0h5l1 1.500h8V12H0z" /><path stroke="#fff3c4" d="M1 3.500h12" /><path stroke="#3aa0e6" strokeWidth="2" d="M3 12V7h8v5" /></Icon>
      </TaskButton>
      <TaskButton aria-label="Microsoft Store">
        <Icon w={16} h={14}><path stroke="#fff" d="M5.500 3V.5h5V3" /><path stroke="none" fill="#fff" d="M0 3h16l-1 11H1z" /><path stroke="none" fill="#f25022" d="M5 5h2.500v3H5z" /><path stroke="none" fill="#7fba00" d="M8.500 5H11v3H8.500z" /><path stroke="none" fill="#00a4ef" d="M5 9h2.500v3H5z" /><path stroke="none" fill="#ffb900" d="M8.500 9H11v3H8.500z" /></Icon>
      </TaskButton>
      <TaskButton aria-label="メール">
        <Icon w={15} h={13}><path stroke="none" fill="#fff" d="M0 4l7.500-4L15 4v9H0z" /><path stroke="none" fill="#02121a" d="M1 4.500h13L7 8.500 9 11 5 7.500z" /></Icon>
      </TaskButton>
      <TaskButton $active $open aria-label="PowerPoint">
        <Icon w={16} h={14}><circle cx="9" cy="7" r="6.500" fill="#e2583a" stroke="none" /><path stroke="none" fill="#f39a80" d="M9 .5A6.500 6.500 0 0 1 15.500 7H9z" /><path stroke="none" fill="#b93a1e" d="M0 3h8v8H0z" /><path stroke="#fff" d="M3 9.500v-5h1.500q1.500 1.200 0 2.500H3" /></Icon>
      </TaskButton>
      <Push />
      <TaskButton $w={26} aria-label="People"><Icon w={12}><circle cx="7.500" cy="3" r="2" /><circle cx="4" cy="6" r="1.700" /><path d="M1 11q0-3 3-3t3 3M8 5.500q3 0 3 3" /></Icon></TaskButton>
      <TaskButton $w={22} aria-label="隠れているインジケーター"><Icon w={8}><path d="M0 6l4-4 4 4" /></Icon></TaskButton>
      <TaskButton $w={20} aria-label="OneDrive"><Icon w={11} h={8}><path fill="#fff" stroke="none" d="M2 7.500q-3-2 .5-3.500Q4-.5 7 3q4 0 4 2.500 0 2-2 2z" /></Icon></TaskButton>
      <TaskButton $w={20} aria-label="電源"><Icon w={11} h={8}><path fill="#bbb" d="M3 2.500h7v4H3zM10.500 4v1M0 .5h4v2H1z" /></Icon></TaskButton>
      <TaskButton $w={20} aria-label="ネットワーク"><Icon w={10}><path stroke="#bbb" d="M1 9A8 8 0 0 1 9 1M4 9a5 5 0 0 1 5-5M7 9a2 2 0 0 1 2-2" /></Icon></TaskButton>
      <TaskButton $w={20} aria-label="音量"><Icon w={10}><path d="M0 3.500h2L4.500 1v8L2 6.500H0z" /><path stroke="#8a979c" d="M6 3.500q1.500 1.500 0 3M8 2q3 3 0 6" /></Icon></TaskButton>
      <TaskButton $w={24} aria-label="ペン"><Icon w={10}><path d="M1 9q0-4 3-3t1 3T2 8l7-6M7 1l2 2M6 4l2 1" /></Icon></TaskButton>
      <TaskButton $w={18} aria-label="入力"><Icon w={10}><circle cx="5" cy="5" r="4" fill="#555f64" stroke="#bbb" /><path d="M3.500 3.500l3 3M6.500 3.500l-3 3" /></Icon></TaskButton>
      <Clock><span>16:33</span><span>2020/01/07</span></Clock>
      <TaskButton $w={26} aria-label="通知"><Icon w={12}><path d="M1 1.500h10v8H8L6 11.500V9.500H1z" /></Icon></TaskButton>
      <DeskEdge />
    </TaskBar>
  );
}

export default function App() {
  return (
    <Page lang="ja">
      <GlobalStyle />
      <Title />
      <TabRow />
      <RibbonBar />
      <Editor />
      <Status />
      <Tasks />
    </Page>
  );
}
